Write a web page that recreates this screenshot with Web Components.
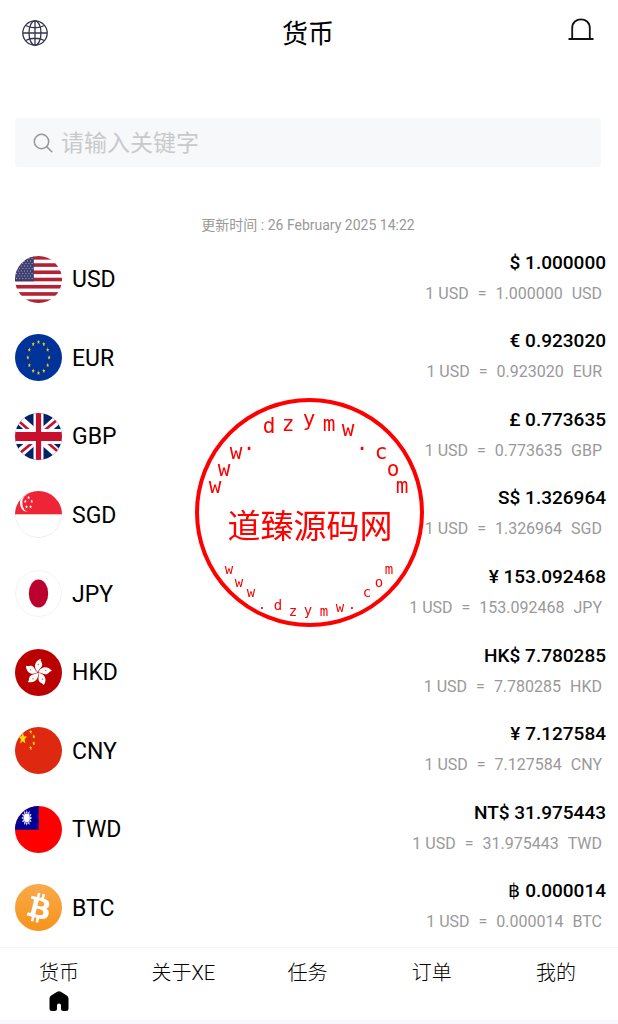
<!DOCTYPE html>
<html lang="zh-CN">
<head>
<meta charset="utf-8">
<meta name="viewport" content="width=device-width, initial-scale=1">
<title>货币</title>
<style>
  html, body {
    margin: 0;
    background: #fff;
    color: #000;
    font-family: Roboto, "Noto Sans CJK SC", sans-serif;
  }
</style>
</head>
<body>
<currency-app></currency-app>

<script>
const star = (cx, cy, rx, ry, fill) => {
  const points = [];
  for (let i = 0; i < 10; i++) {
    const k = i % 2 ? 0.45 : 1;
    const a = (Math.PI * i) / 5;
    points.push(`${(cx + Math.sin(a) * rx * k).toFixed(2)},${(cy - Math.cos(a) * ry * k).toFixed(2)}`);
  }
  return `<polygon points="${points.join(" ")}" fill="${fill}"/>`;
};

const usFlag = () => {
  let out = `<rect width="47" height="47" fill="#fff"/>`;
  for (let i = 0; i < 7; i++) {
    out += `<rect y="${i * 7.23}" width="47" height="3.62" fill="#b22234"/>`;
  }
  out += `<rect width="18.8" height="25.3" fill="#3c3b6e"/>`;
  for (let r = 0; r < 9; r++) {
    for (let c = 0; c < (r % 2 ? 5 : 6); c++) {
      out += `<ellipse cx="${1.6 + c * 3.1 + (r % 2 ? 1.55 : 0)}" cy="${2.5 + r * 2.5}" rx=".6" ry=".8" fill="#a9a9c2"/>`;
    }
  }
  return out;
};

const euFlag = () => {
  let out = `<rect width="47" height="47" fill="#039"/>`;
  for (let i = 0; i < 12; i++) {
    const a = (Math.PI * i) / 6;
    out += star(23.5 + Math.sin(a) * 10.6, 23.5 - Math.cos(a) * 15.5, 1.6, 2.4, "#fc0");
  }
  return out;
};

const hkFlag = () => {
  let out = `<rect width="47" height="47" fill="#ba0000"/>`;
  for (let i = 0; i < 5; i++) {
    out += `<g transform="translate(23 23.5) rotate(${i * 72 + 6})">
      <path d="M0-.5C-4-2.500-6.500-10 1.500-14 .5-11.500 4.500-10 3.200-6.500 2-4 .5-3 0-.5Z" fill="#fff"/>
      <circle cx="-.5" cy="-8" r=".7" fill="#ba0000" fill-opacity=".6"/></g>`;
  }
  return out;
};

const twFlag = () => {
  let out = `<rect width="47" height="47" fill="#fe0000"/><rect width="23.7" height="23.7" fill="#000095"/>`;
  for (let i = 0; i < 12; i++) {
    out += `<path transform="translate(11.8 12) scale(.7 1) rotate(${i * 30})" d="M-1.5-4 0-8 1.5-4Z" fill="#fff"/>`;
  }
  return out + `<ellipse cx="11.8" cy="12" rx="3.4" ry="4.9" fill="#000095"/><ellipse cx="11.8" cy="12" rx="3.1" ry="4.4" fill="#fff"/>`;
};

const FLAGS = {
  USD: usFlag(),
  EUR: euFlag(),
  GBP: `<rect width="47" height="47" fill="#012169"/>
    <path d="M-2 1 49 46M-2 46 49 1" stroke="#fff" stroke-width="9"/>
    <path d="M-2 3 23 25M49 44 24 22M23 25-2 46M24 22 49 1" stroke="#c8102e" stroke-width="2.6"/>
    <path d="M23.5 0V47M0 23.5H47" stroke="#fff" stroke-width="10"/>
    <path d="M0 23.5H47" stroke="#fff" stroke-width="15"/>
    <path d="M23.5 0V47" stroke="#c8102e" stroke-width="5.2"/>
    <path d="M0 23.5H47" stroke="#c8102e" stroke-width="9"/>`,
  SGD: `<rect width="47" height="47" fill="#fff"/>
    <circle cx="23.5" cy="23.5" r="23" fill="none" stroke="#ececec"/><rect width="47" height="23.3" fill="#ee2536"/>
    <ellipse cx="11.3" cy="12" rx="6.3" ry="8.6" fill="#fff"/><ellipse cx="13.5" cy="12" rx="6.2" ry="8.8" fill="#ee2536"/>
    ${[[13.6, 6.6], [10.3, 10.4], [16.8, 10.4], [11.5, 15.8], [15.6, 15.8]].map(([x, y]) => star(x, y, 1.4, 2, "#fff")).join("")}`,
  JPY: `<rect width="47" height="47" fill="#fff"/><ellipse cx="23.5" cy="23.5" rx="9.7" ry="14" fill="#bc002d"/>
    <circle cx="23.5" cy="23.5" r="23" fill="none" stroke="#f0f0f0"/>`,
  HKD: hkFlag(),
  CNY: `<rect width="47" height="47" fill="#de2910"/>${star(7.8, 11.5, 4.4, 6.2, "#ffde00")}
    ${[[15.7, 4.8], [18.8, 9.6], [18.8, 16.4], [15.7, 21]].map(([x, y]) => star(x, y, 1.6, 2.4, "#ffde00")).join("")}`,
  TWD: twFlag(),
  BTC: `<defs><linearGradient id="coin" x2="0" y2="1"><stop stop-color="#f9aa4b"/><stop offset="1" stop-color="#f7931a"/></linearGradient></defs>
    <rect width="47" height="47" fill="url(#coin)"/>
    <path transform="translate(-.7 -.4) scale(1.51)" fill="#fff" d="M23.189 14.02c.314-2.096-1.283-3.223-3.465-3.975l.708-2.84-1.728-.43-.69 2.765c-.454-.114-.92-.22-1.385-.326l.695-2.783L15.596 6l-.708 2.839c-.376-.086-.746-.17-1.104-.26l.002-.009-2.384-.595-.46 1.846s1.283.294 1.256.312c.7.175.826.638.805 1.006l-.806 3.235c.048.012.11.03.18.057l-.183-.045-1.13 4.532c-.086.212-.303.531-.793.41.018.025-1.256-.313-1.256-.313l-.858 1.978 2.25.561c.418.105.828.215 1.231.318l-.715 2.872 1.727.43.708-2.84c.472.127.93.245 1.378.357l-.706 2.828 1.728.43.715-2.866c2.948.558 5.164.333 6.097-2.333.752-2.146-.037-3.385-1.588-4.192 1.13-.26 1.98-1.003 2.207-2.538zm-3.95 5.538c-.533 2.147-4.148.986-5.32.695l.95-3.805c1.172.293 4.929.872 4.37 3.11zm.535-5.569c-.487 1.953-3.495.96-4.47.717l.86-3.45c.975.243 4.118.696 3.61 2.733z"/>`,
};

const RATES = [
  ["USD", "$", "1.000000"],
  ["EUR", "€", "0.923020"],
  ["GBP", "£", "0.773635"],
  ["SGD", "S$", "1.326964"],
  ["JPY", "¥", "153.092468"],
  ["HKD", "HK$", "7.780285"],
  ["CNY", "¥", "7.127584"],
  ["TWD", "NT$", "31.975443"],
  ["BTC", "฿", "0.000014"],
];

class CurrencyFlag extends HTMLElement {
  constructor() {
    super();
    this.attachShadow({ mode: "open" });
  }

  connectedCallback() {
    this.shadowRoot.innerHTML = `
      <style>
        :host { display: block; width: 47px; height: 47px; border-radius: 50%; overflow: hidden; flex: none; }
        svg { display: block; width: 100%; height: 100%; }
      </style>
      <svg viewBox="0 0 47 47" aria-hidden="true">${FLAGS[this.getAttribute("code")]}</svg>`;
  }
}

class AppHeader extends HTMLElement {
  constructor() {
    super();
    this.attachShadow({ mode: "open" });
    this.shadowRoot.innerHTML = `
      <style>
        :host { display: block; }
        header {
          display: flex;
          justify-content: space-between;
          align-items: center;
          height: 66px;
          padding: 0 24px 0 22px;
        }
        h1 { margin: 0; padding-top: 2px; font-size: 26px; line-height: 40px; font-weight: 400; }
        button { display: flex; padding: 0; border: 0; background: none; }
        svg { display: block; width: 26px; height: 26px; fill: none; overflow: visible; }
      </style>
      <header>
        <button type="button" aria-label="Language">
          <svg viewBox="0 0 26 26" stroke="#33334d" stroke-width="1.3">
            <circle cx="13" cy="13" r="12.2"/>
            <ellipse cx="13" cy="13" rx="6" ry="12.2"/>
            <path d="M13 1V25M1 13H25M3.5 5.5Q13 10 22.5 5.5M3.5 20.5Q13 16 22.5 20.5"/>
          </svg>
        </button>
        <h1><slot></slot></h1>
        <button type="button" aria-label="Notifications">
          <svg viewBox="0 0 26 26" stroke="#111" stroke-width="1.8">
            <path d="M4.200 19V8C4.200-3.500 21.800-3.500 21.800 8V19M.5 19H25.500"/>
          </svg>
        </button>
      </header>`;
  }
}

class SearchBox extends HTMLElement {
  constructor() {
    super();
    this.attachShadow({ mode: "open" });
    this.shadowRoot.innerHTML = `
      <style>
        :host { display: block; margin: 52px 17px 0 15px; }
        label {
          display: flex;
          align-items: center;
          gap: 8px;
          height: 49px;
          padding: 0 18px;
          border-radius: 3px;
          background: #f7f8fa;
        }
        svg { width: 20px; height: 20px; flex: none; fill: none; stroke: #969799; stroke-width: 1.5; }
        input {
          flex: 1;
          min-width: 0;
          padding: 2px 0 0;
          border: 0;
          outline: 0;
          background: none;
          font: inherit;
          font-size: 23px;
          line-height: 36px;
        }
        input::placeholder { color: #c8c9cc; opacity: 1; }
      </style>
      <label>
        <svg viewBox="0 0 20 20" aria-hidden="true"><circle cx="8.500" cy="8.500" r="7.200"/><path d="M13.600 13.600 19.300 19.300"/></svg>
        <input type="search" aria-label="请输入关键字" placeholder="请输入关键字">
      </label>`;
  }
}

class RateRow extends HTMLElement {
  constructor() {
    super();
    this.attachShadow({ mode: "open" });
  }

  connectedCallback() {
    const code = this.getAttribute("code");
    const rate = this.getAttribute("rate");
    this.shadowRoot.innerHTML = `
      <style>
        :host {
          display: flex;
          flex: 1;
          align-items: center;
          gap: 10px;
          min-height: 64px;
          padding: 0 12px 0 15px;
        }
        .code { flex: 1; padding-top: 2px; font-size: 23px; line-height: 32px; }
        .values { padding-bottom: 3px; text-align: right; }
        .amount { font-size: 19px; line-height: 31px; font-weight: 500; }
        .detail {
          display: flex;
          justify-content: flex-end;
          gap: 9px;
          padding-right: 4px;
          font-size: 16px;
          line-height: 31px;
          color: #999;
        }
      </style>
      <currency-flag code="${code}"></currency-flag>
      <div class="code">${code}</div>
      <div class="values">
        <div class="amount">${this.getAttribute("symbol")} ${rate}</div>
        <div class="detail"><span>1 USD</span> <span>=</span> <span>${rate}</span> <span>${code}</span></div>
      </div>`;
  }
}

class TabBar extends HTMLElement {
  constructor() {
    super();
    this.attachShadow({ mode: "open" });
    this.shadowRoot.innerHTML = `
      <style>
        :host { display: block; border-top: 1px solid #f5f5f6; border-bottom: 4px solid #f7f8fc; background: #fff; }
        nav { display: flex; height: 72px; margin-left: -3px; }
      </style>
      <nav><slot></slot></nav>`;
  }
}

class TabItem extends HTMLElement {
  constructor() {
    super();
    this.attachShadow({ mode: "open" });
  }

  connectedCallback() {
    const icon = this.hasAttribute("active")
      ? `<svg viewBox="0 0 20 20" aria-hidden="true"><path d="M8.200.8Q10-.4 11.800.8L17.800 4.600Q19.500 5.800 19.500 7.500V17.500Q19.500 20 17 20H14.500Q12 20 12 17.500V14.500Q12 12.500 10 12.500T8 14.500V17.500Q8 20 5.500 20H3Q.5 20 .5 17.500V7.500Q.5 5.800 2.200 4.600Z"/></svg>`
      : "";
    this.shadowRoot.innerHTML = `
      <style>
        :host { display: block; flex: 1; }
        a {
          display: flex;
          flex-direction: column;
          align-items: center;
          gap: 3px;
          padding-top: 10px;
          color: #000;
          font-size: 20px;
          font-weight: 300;
          line-height: 30px;
          text-decoration: none;
        }
        svg { width: 20px; height: 20px; }
      </style>
      <a href="#${this.getAttribute("to")}"><span><slot></slot></span>${icon}</a>`;
  }
}

class RoundStamp extends HTMLElement {
  constructor() {
    super();
    this.attachShadow({ mode: "open" });
    const top = [["w", 22, 97], ["w", 31, 80], ["w", 43, 63], [".", 56, 54], ["d", 76, 37], ["z", 95, 35], ["y", 116, 30],
      ["m", 136, 35], ["w", 155, 40], [".", 169, 54], ["c", 188, 63], ["o", 200, 80], ["m", 209, 97]];
    const bottom = [["w", 36, 178], ["w", 46, 191], ["w", 58, 201], [".", 69, 213], ["d", 85, 214], ["z", 100, 220], ["y", 115, 219],
      ["m", 131, 220], ["w", 147, 216], [".", 159, 213], ["c", 174, 201], ["o", 186, 191], ["m", 196, 178]];
    // one x and one y per letter keeps each ring a single readable string
    const ring = (letters, size) => `<text font-size="${size}" x="${letters.map((l) => l[1])}" y="${letters.map((l) => l[2])}">${letters.map((l) => l[0]).join("")}</text>`;
    this.shadowRoot.innerHTML = `
      <style>
        :host { display: block; position: fixed; inset: 0; width: 232px; height: 232px; margin: auto; pointer-events: none; }
        svg { display: block; width: 100%; height: 100%; overflow: visible; }
        text { fill: #f00; text-anchor: middle; font-family: "DejaVu Sans Mono", monospace; }
        .name { font-family: "Noto Sans CJK SC", sans-serif; font-size: 33px; }
      </style>
      <svg viewBox="0 0 232 232">
        <circle cx="116.500" cy="116.500" r="112.500" fill="none" stroke="#f00" stroke-width="4"/>
        ${ring(top, 21)}
        <text class="name" x="117" y="142">道臻源码网</text>
        ${ring(bottom, 14)}
      </svg>`;
  }
}

class CurrencyApp extends HTMLElement {
  constructor() {
    super();
    this.attachShadow({ mode: "open" });
    this.shadowRoot.innerHTML = `
      <style>
        :host { display: flex; flex-direction: column; min-height: 100vh; }
        .updated { margin: 47px 2px 3px 0; font-size: 14px; line-height: 23px; color: #999; text-align: center; }
        main { display: flex; flex: 1; flex-direction: column; }
        tab-bar { position: sticky; bottom: 0; }
      </style>
      <app-header>货币</app-header>
      <search-box></search-box>
      <p class="updated">更新时间 : 26 February 2025 14:22</p>
      <main>${RATES.map(([code, symbol, rate]) => `<rate-row code="${code}" symbol="${symbol}" rate="${rate}"></rate-row>`).join("")}</main>
      <tab-bar>
        <tab-item to="currency" active>货币</tab-item>
        <tab-item to="about">关于XE</tab-item>
        <tab-item to="tasks">任务</tab-item>
        <tab-item to="orders">订单</tab-item>
        <tab-item to="mine">我的</tab-item>
      </tab-bar>
      <round-stamp></round-stamp>`;
  }
}

customElements.define("currency-flag", CurrencyFlag);
customElements.define("app-header", AppHeader);
customElements.define("search-box", SearchBox);
customElements.define("rate-row", RateRow);
customElements.define("tab-bar", TabBar);
customElements.define("tab-item", TabItem);
customElements.define("round-stamp", RoundStamp);
customElements.define("currency-app", CurrencyApp);
</script>
</body>
</html>
